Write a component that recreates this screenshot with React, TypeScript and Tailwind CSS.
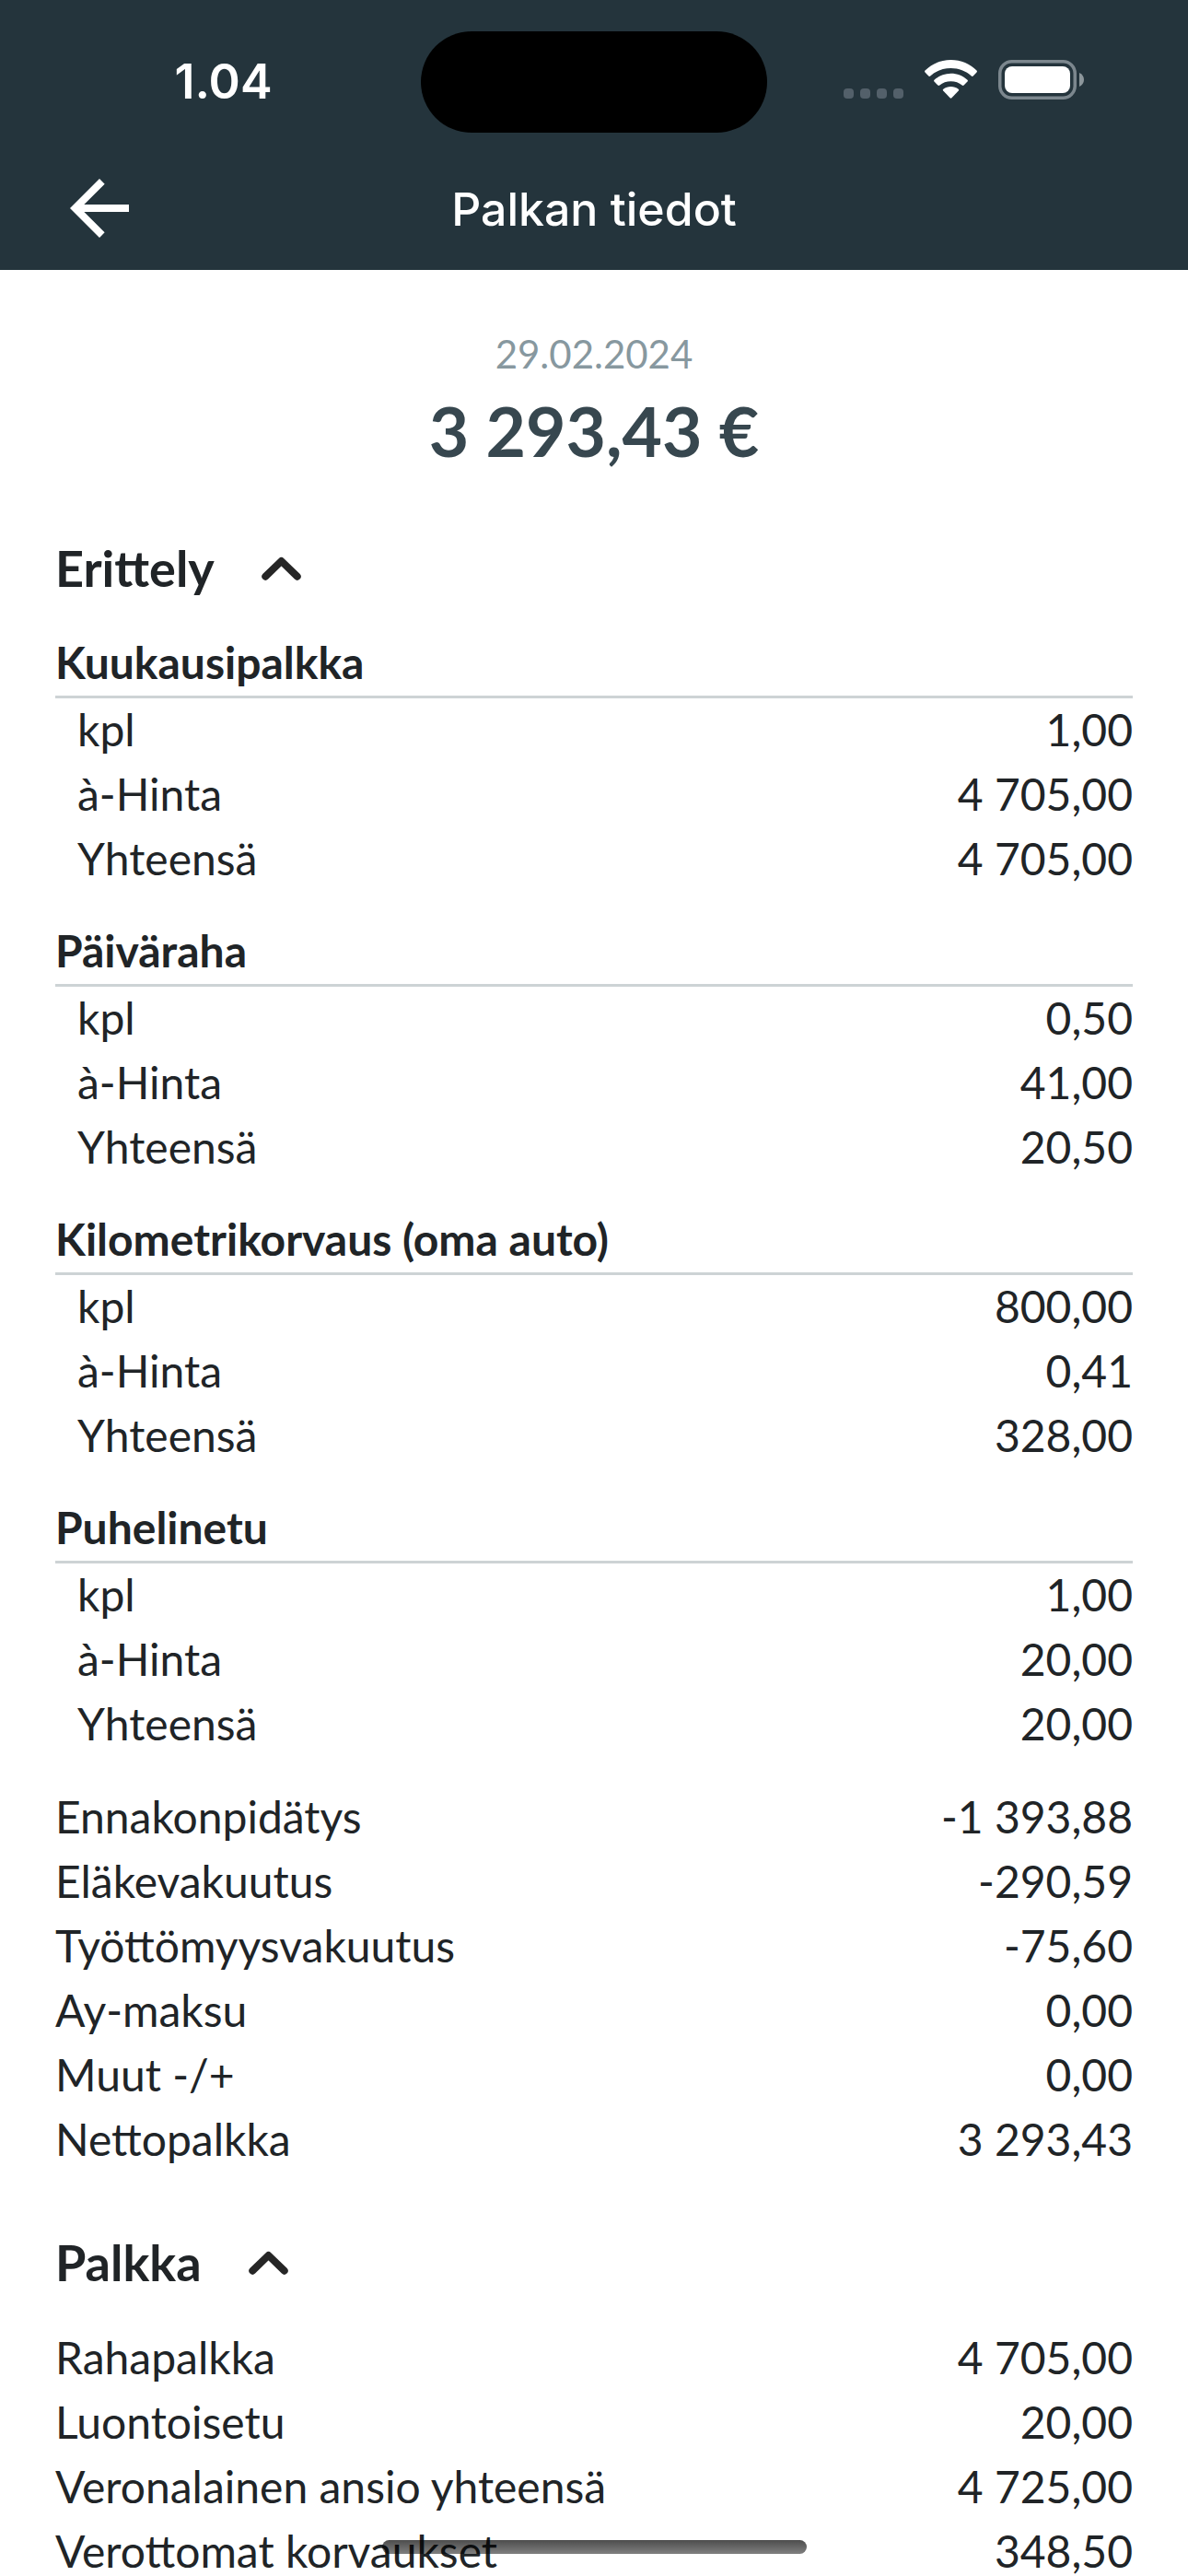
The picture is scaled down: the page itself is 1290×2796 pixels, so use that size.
import { useState, type ReactNode } from 'react';

type Item = { label: string; value: string };
type Group = { title: string; items: Item[] };

const groups: Group[] = [
  {
    title: 'Kuukausipalkka',
    items: [
      { label: 'kpl', value: '1,00' },
      { label: 'à-Hinta', value: '4 705,00' },
      { label: 'Yhteensä', value: '4 705,00' },
    ],
  },
  {
    title: 'Päiväraha',
    items: [
      { label: 'kpl', value: '0,50' },
      { label: 'à-Hinta', value: '41,00' },
      { label: 'Yhteensä', value: '20,50' },
    ],
  },
  {
    title: 'Kilometrikorvaus (oma auto)',
    items: [
      { label: 'kpl', value: '800,00' },
      { label: 'à-Hinta', value: '0,41' },
      { label: 'Yhteensä', value: '328,00' },
    ],
  },
  {
    title: 'Puhelinetu',
    items: [
      { label: 'kpl', value: '1,00' },
      { label: 'à-Hinta', value: '20,00' },
      { label: 'Yhteensä', value: '20,00' },
    ],
  },
];

const deductions: Item[] = [
  { label: 'Ennakonpidätys', value: '-1 393,88' },
  { label: 'Eläkevakuutus', value: '-290,59' },
  { label: 'Työttömyysvakuutus', value: '-75,60' },
  { label: 'Ay-maksu', value: '0,00' },
  { label: 'Muut -/+', value: '0,00' },
  { label: 'Nettopalkka', value: '3 293,43' },
];

const salary: Item[] = [
  { label: 'Rahapalkka', value: '4 705,00' },
  { label: 'Luontoisetu', value: '20,00' },
  { label: 'Veronalainen ansio yhteensä', value: '4 725,00' },
  { label: 'Verottomat korvaukset', value: '348,50' },
];

function StatusIcons() {
  return (
    <div className="flex items-end pb-[5px]">
      <div className="mr-[23px] flex gap-[7px] pb-px">
        <span className="size-[11px] rounded-[4px] bg-[#53606a]" />
        <span className="size-[11px] rounded-[4px] bg-[#53606a]" />
        <span className="size-[11px] rounded-[4px] bg-[#53606a]" />
        <span className="size-[11px] rounded-[4px] bg-[#53606a]" />
      </div>
      <svg className="mr-[23px] mb-px h-[42px] w-[57px]" viewBox="0 0 57 42" fill="#fff" aria-hidden="true">
        <path d="M28.5 0C39.500 0 49.500 4.300 56.500 11.600Q57.400 12.500 56.500 13.500L52.700 17.500Q51.800 18.400 50.800 17.500C44.900 12 37.100 9 28.500 9S12.100 12 6.200 17.500Q5.200 18.400 4.300 17.500L.5 13.500Q-.4 12.500.5 11.600C7.500 4.300 17.500 0 28.500 0Z" />
        <path d="M28.500 14.700C35.300 14.700 41.700 17.300 46.500 21.700Q47.400 22.600 46.500 23.600L42.600 27.600Q41.700 28.500 40.700 27.600C37.400 24.800 33.100 23.300 28.500 23.300S19.600 24.800 16.300 27.600Q15.300 28.500 14.400 27.600L10.500 23.600Q9.600 22.600 10.500 21.700C15.300 17.300 21.700 14.700 28.500 14.700Z" />
        <path d="M28.500 29C31.500 29 34.400 30 36.700 31.700Q37.700 32.500 36.800 33.500L29.400 41.300Q28.500 42.200 27.600 41.300L20.200 33.500Q19.300 32.500 20.300 31.700C22.600 30 25.500 29 28.500 29Z" />
      </svg>
      <svg className="h-[43px] w-[93px]" viewBox="0 0 93 43" aria-hidden="true">
        <rect x="1.750" y="1.750" width="81.500" height="39.500" rx="13" fill="none" stroke="#7c878e" strokeWidth="3.500" />
        <rect x="7" y="7" width="71" height="29" rx="8" fill="#fff" />
        <path d="M88 14C91 15.300 93 18 93 21.500S91 27.700 88 29Z" fill="#8c969b" />
      </svg>
    </div>
  );
}

function Chevron({ open }: { open: boolean }) {
  return (
    <svg
      className={open ? 'h-[26px] w-[43px]' : 'h-[26px] w-[43px] rotate-180'}
      viewBox="0 0 43 26"
      fill="none"
      stroke="#262626"
      strokeWidth="8"
      strokeLinecap="round"
      strokeLinejoin="round"
      aria-hidden="true"
    >
      <path d="M4.300 21.700L21.500 5L38.700 21.700" />
    </svg>
  );
}

function Section({ title, children }: { title: string; children: ReactNode }) {
  const [open, setOpen] = useState(true);
  return (
    <section>
      <h2>
        <button
          type="button"
          aria-expanded={open}
          onClick={() => setOpen(!open)}
          className="flex items-center gap-[51px] text-[54px] leading-[72px] font-bold"
        >
          {title}
          <Chevron open={open} />
        </button>
      </h2>
      {open && children}
    </section>
  );
}

function Rows({ items, label, inset = false }: { items: Item[]; label: string; inset?: boolean }) {
  return (
    <table className="w-full leading-[68px]" aria-label={label}>
      <tbody>
        {items.map((item) => (
          <tr key={item.label}>
            <th
              scope="row"
              className={inset ? 'p-0 pb-0.5 pl-6 text-left font-normal' : 'p-0 pb-0.5 text-left font-normal'}
            >
              {item.label}
            </th>
            <td className="p-0 pb-0.5 text-right">{item.value}</td>
          </tr>
        ))}
      </tbody>
    </table>
  );
}

export default function App() {
  return (
    <div className="relative flex h-screen flex-col overflow-hidden bg-white font-['Lato',sans-serif] text-[#202427]">
      <header className="shrink-0 bg-[#24343c] font-['Inter',sans-serif] text-white">
        <div className="grid grid-cols-[1fr_376px_1fr] items-center pt-[34px] pb-[15px]">
          <div className="flex justify-center pl-7 text-[52px] leading-[60px] font-semibold">1.04</div>
          <div className="h-[110px] rounded-full bg-black" />
          <div className="flex justify-center pr-[30px]">
            <StatusIcons />
          </div>
        </div>
        <div className="grid h-[134px] grid-cols-[1fr_auto_1fr] items-center px-[60px]">
          <button type="button" aria-label="Takaisin" className="size-24">
            <svg className="size-24" viewBox="0 0 24 24" fill="currentColor" aria-hidden="true">
              <path d="M20 11H7.830l5.590-5.590L12 4l-8 8 8 8 1.410-1.410L7.830 13H20v-2z" />
            </svg>
          </button>
          <h1 className="pt-0.5 text-[50px] leading-[60px] font-medium">Palkan tiedot</h1>
        </div>
      </header>

      <main className="min-h-0 flex-1 overflow-y-auto px-[60px] pt-[61px] text-[48px] leading-[66px] [scrollbar-width:none]">
        <div className="text-center">
          <p className="text-[42px] leading-[60px] text-[#87989f]">29.02.2024</p>
          <p className="text-[75px] leading-[106px] font-bold text-[#37474f]">3 293,43 €</p>
        </div>

        <div className="mt-[61px]">
          <Section title="Erittely">
            <div className="mt-[33px] flex flex-col gap-[31px]">
              {groups.map((group) => (
                <div key={group.title}>
                  <h3 className="border-b-3 border-[#cdd3d5] pb-[3px] font-bold">{group.title}</h3>
                  <Rows items={group.items} label={group.title} inset />
                </div>
              ))}
              <Rows items={deductions} label="Vähennykset" />
            </div>
          </Section>
        </div>

        <div className="mt-[62px]">
          <Section title="Palkka">
            <div className="mt-[33px]">
              <Rows items={salary} label="Palkka" />
            </div>
          </Section>
        </div>
      </main>

      <div className="absolute inset-x-0 bottom-6 flex justify-center">
        <div className="h-[15px] w-[461px] rounded-full bg-linear-to-b from-black/70 to-black/50" />
      </div>
    </div>
  );
}
